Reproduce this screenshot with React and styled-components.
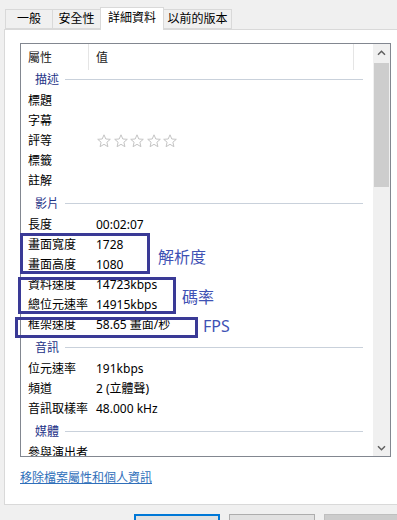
import React from "react";
import styled, { createGlobalStyle } from "styled-components";

const GlobalStyle = createGlobalStyle`
  * { box-sizing: border-box; }
  body {
    margin: 0;
    background: #f0f0f0;
    font-family: "Noto Sans", "Noto Sans CJK TC", sans-serif;
  }
`;

const tabs = [
  { label: "一般", w: 48 },
  { label: "安全性", w: 49 },
  { label: "詳細資料", w: 64, active: true },
  { label: "以前的版本", w: 69 },
];

const sections = [
  {
    title: "描述",
    rows: [["標題"], ["字幕"], ["評等", "stars"], ["標籤"], ["註解"]],
  },
  {
    title: "影片",
    rows: [
      ["長度", "00:02:07"],
      ["畫面寬度", "1728"],
      ["畫面高度", "1080"],
      ["資料速度", "14723kbps"],
      ["總位元速率", "14915kbps"],
      ["框架速度", "58.65 畫面/秒"],
    ],
  },
  {
    title: "音訊",
    rows: [
      ["位元速率", "191kbps"],
      ["頻道", "2 (立體聲)"],
      ["音訊取樣率", "48.000 kHz"],
    ],
  },
  {
    title: "媒體",
    rows: [["參與演出者"]],
  },
];

const notes = [
  { box: { left: 20, top: 233, width: 130, height: 41 }, text: "解析度", x: 158, y: 247 },
  { box: { left: 18, top: 277, width: 158, height: 37 }, text: "碼率", x: 182, y: 287 },
  { box: { left: 15, top: 317, width: 183, height: 21 }, text: "FPS", x: 203, y: 316 },
];

function Star() {
  return (
    <svg width="14" height="14" viewBox="0 0 14 14">
      <polygon
        points="7,0.8 8.8,5 13.3,5.3 9.9,8.2 10.9,12.7 7,10.3 3.1,12.7 4.1,8.2 0.7,5.3 5.2,5"
        fill="#fff"
        stroke="#c4c4c4"
        strokeWidth="1"
        strokeLinejoin="round"
      />
    </svg>
  );
}

function Chevron({ down }) {
  return (
    <svg width="9" height="6" viewBox="0 0 9 6">
      <polyline
        points={down ? "1,1.2 4.5,4.7 8,1.2" : "1,4.8 4.5,1.3 8,4.8"}
        fill="none"
        stroke="#606060"
        strokeWidth="1.5"
      />
    </svg>
  );
}

export default function App() {
  return (
    <Dialog>
      <GlobalStyle />
      <TabStrip>
        {tabs.map((t) => (
          <Tab key={t.label} $w={t.w} $active={t.active}>
            {t.label}
          </Tab>
        ))}
      </TabStrip>
      <Panel>
        <ListBox>
          <ListBody>
            <Header>
              <HeadCell $w={68}>屬性</HeadCell>
              <HeadCell $w={265}>值</HeadCell>
            </Header>
            {sections.map((s) => (
              <React.Fragment key={s.title}>
                <GroupRow>
                  <span>{s.title}</span>
                  <GroupLine />
                </GroupRow>
                {s.rows.map(([name, value]) => (
                  <Row key={name}>
                    <Name>{name}</Name>
                    <Value>
                      {value === "stars" ? (
                        <Stars>
                          {[0, 1, 2, 3, 4].map((i) => (
                            <Star key={i} />
                          ))}
                        </Stars>
                      ) : (
                        value
                      )}
                    </Value>
                  </Row>
                ))}
              </React.Fragment>
            ))}
          </ListBody>
          <ScrollBar>
            <ArrowBtn>
              <Chevron />
            </ArrowBtn>
            <Track>
              <Thumb />
            </Track>
            <ArrowBtn>
              <Chevron down />
            </ArrowBtn>
          </ScrollBar>
        </ListBox>
        <RemoveLink href="#">移除檔案屬性和個人資訊</RemoveLink>
      </Panel>
      <Footer>
        <Button $primary>確定</Button>
        <Button>取消</Button>
        <Button $disabled>套用</Button>
      </Footer>
      {notes.map((n) => (
        <React.Fragment key={n.text}>
          <NoteBox style={n.box} />
          <NoteText style={{ left: n.x, top: n.y }}>{n.text}</NoteText>
        </React.Fragment>
      ))}
    </Dialog>
  );
}

const Dialog = styled.div`
  position: relative;
  width: 397px;
  height: 520px;
  overflow: hidden;
  background: #f0f0f0;
  font-size: 12px;
  color: #000;
`;

const TabStrip = styled.div`
  position: relative;
  z-index: 1;
  display: flex;
  align-items: flex-end;
  height: 29px;
  padding-left: 5px;
`;

const Tab = styled.div`
  width: ${({ $w }) => $w}px;
  height: ${({ $active }) => ($active ? 23 : 20)}px;
  margin-left: -1px;
  margin-bottom: ${({ $active }) => ($active ? -1 : 0)}px;
  display: flex;
  align-items: center;
  justify-content: center;
  padding-bottom: ${({ $active }) => ($active ? 2 : 0)}px;
  border: 1px solid #d9d9d9;
  border-bottom: ${({ $active }) => ($active ? "none" : "1px solid #d9d9d9")};
  background: ${({ $active }) => ($active ? "#fff" : "#f0f0f0")};
  line-height: 16px;
  white-space: nowrap;

  &:first-child {
    margin-left: 0;
  }
`;

const Panel = styled.div`
  width: 410px;
  height: 476px;
  margin-left: 4px;
  padding: 13px 0 0 15px;
  border: 1px solid #d9d9d9;
  background: #fff;
`;

const ListBox = styled.div`
  display: flex;
  width: 371px;
  height: 414px;
  border: 1px solid #828790;
  background: #fff;
`;

const ListBody = styled.div`
  flex: 1;
  overflow: hidden;
`;

const Header = styled.div`
  display: flex;
  height: 23px;
`;

const HeadCell = styled.div`
  width: ${({ $w }) => $w}px;
  height: 26px;
  padding-left: 7px;
  border-right: 1px solid #e5e5e5;
  line-height: 28px;
  color: #222;
`;

const GroupRow = styled.div`
  display: flex;
  align-items: center;
  height: 24px;
  padding: 1px 10px 0 14px;
  color: #1e3287;
  line-height: 16px;
`;

const GroupLine = styled.div`
  flex: 1;
  height: 1px;
  margin: 0 0 1px 6px;
  background: #c9d1db;
`;

const Row = styled.div`
  display: grid;
  grid-template-columns: 68px 1fr;
  height: 20px;
  line-height: 20px;
  white-space: nowrap;
`;

const Name = styled.div`
  padding-left: 7px;
`;

const Value = styled.div`
  padding-left: 7px;
`;

const Stars = styled.div`
  display: flex;
  gap: 2.6px;
  height: 20px;
  align-items: center;
  margin-left: 1px;
`;

const ScrollBar = styled.div`
  display: flex;
  flex-direction: column;
  width: 17px;
  background: #f0f0f0;
`;

const ArrowBtn = styled.div`
  display: flex;
  align-items: center;
  justify-content: center;
  height: 17px;
`;

const Track = styled.div`
  flex: 1;
  padding-top: 2px;
`;

const Thumb = styled.div`
  width: 15px;
  height: 124px;
  margin-left: 1px;
  background: #cdcdcd;
`;

const RemoveLink = styled.a`
  display: inline-block;
  margin-top: 13px;
  color: #2f6fba;
  line-height: 16px;
  text-decoration: underline;
`;

const Footer = styled.div`
  display: flex;
  gap: 9px;
  margin-top: 9px;
  padding-left: 134px;
`;

const Button = styled.div`
  flex: none;
  width: 86px;
  height: 26px;
  display: flex;
  align-items: center;
  justify-content: center;
  border: ${({ $primary, $disabled }) =>
    $primary ? "2px solid #0078d7" : $disabled ? "1px solid #bfbfbf" : "1px solid #adadad"};
  background: ${({ $disabled }) => ($disabled ? "#cccccc" : "#e1e1e1")};
  color: ${({ $disabled }) => ($disabled ? "#838383" : "#000")};
`;

const NoteBox = styled.div`
  position: absolute;
  border: 3px solid #3a3a96;
  pointer-events: none;
`;

const NoteText = styled.div`
  position: absolute;
  font-size: 16px;
  line-height: 20px;
  color: #3f52b4;
  white-space: nowrap;
`;
